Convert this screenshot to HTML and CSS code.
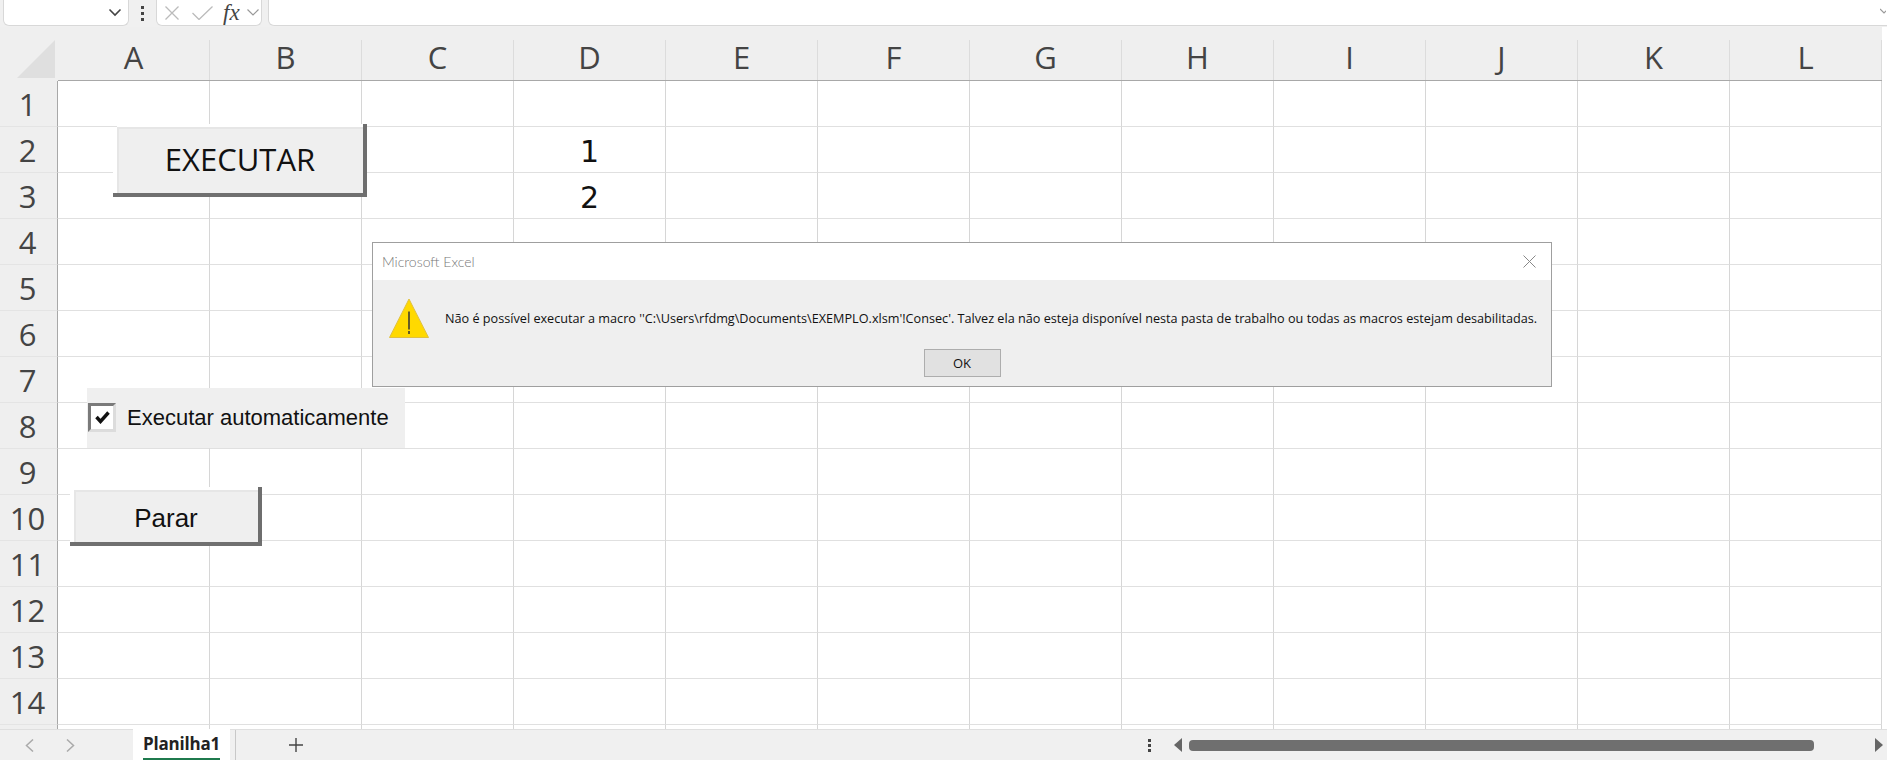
FILE: index.html
```html
<!DOCTYPE html>
<html lang="pt">
<head>
<meta charset="utf-8">
<title>Microsoft Excel</title>
<link rel="stylesheet" href="styles.css">
</head>
<body>
<div class="app">
  <div class="formula-bar">
    <div class="box name-box">
      <svg class="chev" width="14" height="9" viewBox="0 0 14 9"><path d="M1.500 1.500 7 7l5.500-5.500" fill="none" stroke="#444" stroke-width="1.600"/></svg>
    </div>
    <div class="dots"><i></i><i></i><i></i></div>
    <div class="box fx-box">
      <svg class="ic-x" width="14" height="14" viewBox="0 0 14 14"><path d="M.5.5l13 13M13.500.5l-13 13" stroke="#bbb" stroke-width="1.300" fill="none"/></svg>
      <svg class="ic-ok" width="21" height="14" viewBox="0 0 21 14"><path d="M.5 7l6.500 6.500L20.500.5" stroke="#bbb" stroke-width="1.300" fill="none"/></svg>
      <span class="fx">fx</span>
      <svg class="ic-chev" width="12" height="7" viewBox="0 0 12 7"><path d="M.5.5 6 6 11.500.5" fill="none" stroke="#999" stroke-width="1.200"/></svg>
    </div>
    <div class="box formula-input">
      <svg width="6" height="6" viewBox="0 0 6 6"><path d="M0 1l4 4 4-4" fill="none" stroke="#999" stroke-width="1.200"/></svg>
    </div>
  </div>

  <div class="sheet">
    <div class="corner"><svg width="38" height="38" viewBox="0 0 38 38"><path d="M38 0v38H0z" fill="#dfdfdf"/></svg></div>
    <div class="col-h">A</div><div class="col-h">B</div><div class="col-h">C</div><div class="col-h">D</div><div class="col-h">E</div><div class="col-h">F</div><div class="col-h">G</div><div class="col-h">H</div><div class="col-h">I</div><div class="col-h">J</div><div class="col-h">K</div><div class="col-h">L</div>

    <div class="row-h">1</div><div class="c"></div><div class="c"></div><div class="c"></div><div class="c"></div><div class="c"></div><div class="c"></div><div class="c"></div><div class="c"></div><div class="c"></div><div class="c"></div><div class="c"></div><div class="c"></div>
    <div class="row-h">2</div><div class="c"></div><div class="c"></div><div class="c"></div><div class="c num">1</div><div class="c"></div><div class="c"></div><div class="c"></div><div class="c"></div><div class="c"></div><div class="c"></div><div class="c"></div><div class="c"></div>
    <div class="row-h">3</div><div class="c"></div><div class="c"></div><div class="c"></div><div class="c num">2</div><div class="c"></div><div class="c"></div><div class="c"></div><div class="c"></div><div class="c"></div><div class="c"></div><div class="c"></div><div class="c"></div>
    <div class="row-h">4</div><div class="c"></div><div class="c"></div><div class="c"></div><div class="c"></div><div class="c"></div><div class="c"></div><div class="c"></div><div class="c"></div><div class="c"></div><div class="c"></div><div class="c"></div><div class="c"></div>
    <div class="row-h">5</div><div class="c"></div><div class="c"></div><div class="c"></div><div class="c"></div><div class="c"></div><div class="c"></div><div class="c"></div><div class="c"></div><div class="c"></div><div class="c"></div><div class="c"></div><div class="c"></div>
    <div class="row-h">6</div><div class="c"></div><div class="c"></div><div class="c"></div><div class="c"></div><div class="c"></div><div class="c"></div><div class="c"></div><div class="c"></div><div class="c"></div><div class="c"></div><div class="c"></div><div class="c"></div>
    <div class="row-h">7</div><div class="c"></div><div class="c"></div><div class="c"></div><div class="c"></div><div class="c"></div><div class="c"></div><div class="c"></div><div class="c"></div><div class="c"></div><div class="c"></div><div class="c"></div><div class="c"></div>
    <div class="row-h">8</div><div class="c"></div><div class="c"></div><div class="c"></div><div class="c"></div><div class="c"></div><div class="c"></div><div class="c"></div><div class="c"></div><div class="c"></div><div class="c"></div><div class="c"></div><div class="c"></div>
    <div class="row-h">9</div><div class="c"></div><div class="c"></div><div class="c"></div><div class="c"></div><div class="c"></div><div class="c"></div><div class="c"></div><div class="c"></div><div class="c"></div><div class="c"></div><div class="c"></div><div class="c"></div>
    <div class="row-h">10</div><div class="c"></div><div class="c"></div><div class="c"></div><div class="c"></div><div class="c"></div><div class="c"></div><div class="c"></div><div class="c"></div><div class="c"></div><div class="c"></div><div class="c"></div><div class="c"></div>
    <div class="row-h">11</div><div class="c"></div><div class="c"></div><div class="c"></div><div class="c"></div><div class="c"></div><div class="c"></div><div class="c"></div><div class="c"></div><div class="c"></div><div class="c"></div><div class="c"></div><div class="c"></div>
    <div class="row-h">12</div><div class="c"></div><div class="c"></div><div class="c"></div><div class="c"></div><div class="c"></div><div class="c"></div><div class="c"></div><div class="c"></div><div class="c"></div><div class="c"></div><div class="c"></div><div class="c"></div>
    <div class="row-h">13</div><div class="c"></div><div class="c"></div><div class="c"></div><div class="c"></div><div class="c"></div><div class="c"></div><div class="c"></div><div class="c"></div><div class="c"></div><div class="c"></div><div class="c"></div><div class="c"></div>
    <div class="row-h">14</div><div class="c"></div><div class="c"></div><div class="c"></div><div class="c"></div><div class="c"></div><div class="c"></div><div class="c"></div><div class="c"></div><div class="c"></div><div class="c"></div><div class="c"></div><div class="c"></div>
    <div class="row-h partial"></div><div class="c partial"></div><div class="c partial"></div><div class="c partial"></div><div class="c partial"></div><div class="c partial"></div><div class="c partial"></div><div class="c partial"></div><div class="c partial"></div><div class="c partial"></div><div class="c partial"></div><div class="c partial"></div><div class="c partial"></div>
  </div>

  <div class="tabs">
    <div class="nav"><svg width="9" height="13" viewBox="0 0 9 13"><path d="M8 .5 1.500 6.500 8 12.500" fill="none" stroke="#aaa" stroke-width="1.500"/></svg><svg width="9" height="13" viewBox="0 0 9 13"><path d="m1 .5 6.500 6L1 12.500" fill="none" stroke="#aaa" stroke-width="1.500"/></svg></div>
    <div class="tab"><span class="tab-label">Planilha1</span></div>
    <div class="add"><svg width="14" height="14" viewBox="0 0 14 14"><path d="M7 0v14M0 7h14" stroke="#444" stroke-width="1.400"/></svg></div>
    <div class="scroll">
      <div class="dots small"><i></i><i></i><i></i></div>
      <svg class="arrow-l" width="9" height="14" viewBox="0 0 9 14"><path d="M8 0v14L0 7z" fill="#666"/></svg>
      <div class="thumb"></div>
      <svg class="arrow-r" width="8" height="14" viewBox="0 0 8 14"><path d="M0 0v14l8-7z" fill="#666"/></svg>
    </div>
  </div>

  <div class="xl-btn run-btn">EXECUTAR</div>
  <div class="xl-btn stop-btn">Parar</div>

  <div class="check-ctl">
    <div class="check"><svg width="15" height="13" viewBox="0 0 15 13"><path d="M1.500 6l4 4.500 8-9" fill="none" stroke="#111" stroke-width="3.400"/></svg></div>
    <span class="check-label">Executar automaticamente</span>
  </div>

  <div class="dialog">
    <div class="dlg-title">
      <span>Microsoft Excel</span>
      <svg width="13" height="13" viewBox="0 0 13 13"><path d="M.5.5l12 12M12.500.5l-12 12" stroke="#888" stroke-width="1" fill="none"/></svg>
    </div>
    <div class="dlg-body">
      <div class="dlg-msg">
        <svg class="warn" width="40" height="40" viewBox="0 0 40 40"><path d="M20 1 39.500 39.500H.5z" fill="#ffd900" stroke="#e0c040" stroke-width="1"/><path d="M20 13.500v18M20 33v3" stroke="#333" stroke-width="1.500"/></svg>
        <p>Não é possível executar a macro ''C:\Users\rfdmg\Documents\EXEMPLO.xlsm'!Consec'. Talvez ela não esteja disponível nesta pasta de trabalho ou todas as macros estejam desabilitadas.</p>
      </div>
      <div class="dlg-actions"><div class="ok">OK</div></div>
    </div>
  </div>
</div>
</body>
</html>
```
FILE: styles.css
```css
* { box-sizing: border-box; }
html, body { margin: 0; height: 100%; overflow: hidden; background: #fff; }
body { font-family: "Open Sans", "Noto Sans", sans-serif; }

.app { position: relative; width: 1887px; height: 760px; display: flex; flex-direction: column; overflow: hidden; }

.formula-bar { height: 27px; flex: none; background: #f0f0f0; display: flex; align-items: flex-start; padding-left: 3px; }
.box { height: 26px; background: #fff; border: 1px solid #d8d8d8; border-top: 0; border-radius: 0 0 6px 6px; display: flex; align-items: center; flex: none; }
.name-box { width: 126px; justify-content: flex-end; padding-right: 6px; }
.fx-box { width: 106px; padding-left: 8px; }
.ic-ok { margin-left: 13px; }
.ic-chev { margin-left: 7px; }
.fx { font-family: "Liberation Serif", serif; font-style: italic; font-size: 23px; color: #444; line-height: 1; margin-left: 10px; width: 17px; }
.formula-input { flex: 1; margin-left: 6px; margin-right: -2px; border-radius: 0 0 0 6px; justify-content: flex-end; align-items: flex-start; padding-top: 8px; padding-right: 2px; }
.dots { width: 27px; height: 26px; flex: none; display: flex; flex-direction: column; align-items: center; justify-content: center; gap: 3px; }
.dots i { display: block; width: 3px; height: 3px; background: #444; }

.sheet { flex: none; height: 702px; display: grid; grid-template-columns: 58px repeat(12, 152px); grid-template-rows: 54px repeat(14, 46px) 5px; overflow: hidden; background: #fff; }
.corner { background: #efefef; display: flex; align-items: flex-end; justify-content: flex-end; padding: 0 3px 3px 0; }
.col-h { background: #efefef linear-gradient(#dcdcdc, #dcdcdc) right bottom / 1px 40px no-repeat; border-bottom: 1px solid #a8a8a8; display: flex; align-items: center; justify-content: center; font-size: 31px; color: #444; padding: 6px 1px 0 0; }
.row-h { background: #efefef; border-right: 1px solid #a8a8a8; border-bottom: 1px solid #e4e4e4; display: flex; align-items: center; justify-content: center; font-size: 31px; color: #444; padding: 2px 2px 0 0; line-height: 1; }
.row-h.partial { border-bottom: 0; padding: 0; }
.c { border-right: 1px solid #d6d6d6; border-bottom: 1px solid #e0e0e0; }
.c.partial { border-bottom: 0; }
.num { display: flex; align-items: center; justify-content: center; font-family: "DejaVu Sans", sans-serif; font-size: 30px; color: #111; line-height: 1; padding-top: 5px; }

.tabs { flex: none; height: 31px; background: #f0f0f0; border-top: 1px solid #dfdfdf; display: flex; align-items: stretch; }
.nav { width: 133px; flex: none; display: flex; gap: 32px; align-items: center; padding-left: 25px; }
.tab { width: 97px; flex: none; background: #fff; display: flex; justify-content: center; margin-top: -1px; }
.tab-label { font-size: 17px; font-weight: 700; color: #222; line-height: 29px; height: 31px; border-bottom: 2px solid #1f7a4d; letter-spacing: -.2px; }
.add { width: 130px; flex: none; border-left: 1px solid #c8c8c8; margin-left: 5px; display: flex; align-items: center; justify-content: center; padding-right: 10px; }
.scroll { flex: 1; display: flex; align-items: center; padding-left: 779px; }
.scroll .dots.small { width: 10px; gap: 2px; }
.arrow-l { margin-left: 20px; flex: none; }
.thumb { width: 625px; height: 11px; flex: none; background: #6f6f6f; border-radius: 4px; margin-left: 6px; }
.arrow-r { margin-left: 61px; flex: none; }

.xl-btn { position: absolute; background: #efefef; color: #111; display: flex; align-items: center; justify-content: center; box-shadow: inset 2px 2px 0 #e6e6e6, 0 -3px 0 #fff, -4px 0 0 #fff; }
.xl-btn::before { content: ""; position: absolute; top: -3px; right: -4px; bottom: -4px; width: 4px; background: #6e6e6e; }
.xl-btn::after { content: ""; position: absolute; left: -4px; right: -4px; bottom: -4px; height: 4px; background: #707070; }
.run-btn { left: 117px; top: 127px; width: 246px; height: 66px; font-size: 31px; padding-bottom: 2px; }
.stop-btn { left: 74px; top: 490px; width: 184px; height: 52px; font-family: "Liberation Sans", sans-serif; font-size: 26px; padding-top: 4px; }

.check-ctl { position: absolute; left: 87px; top: 388px; width: 318px; height: 60px; background: #efefef; display: flex; align-items: center; gap: 11px; padding: 0 0 2px 1px; }
.check { width: 28px; height: 29px; flex: none; background: #fff; border: 3px solid #dcdcdc; border-top-color: #7a7a7a; border-left-color: #7a7a7a; display: flex; align-items: center; justify-content: center; }
.check-label { font-family: "Liberation Sans", sans-serif; font-size: 22px; color: #111; white-space: nowrap; padding-top: 1px; }

.dialog { position: absolute; left: 372px; top: 242px; width: 1180px; height: 145px; border: 1px solid #9f9f9f; background: #efefef; display: flex; flex-direction: column; }
.dlg-title { height: 37px; flex: none; background: #fff; display: flex; align-items: center; justify-content: space-between; padding: 0 15px 0 9px; font-family: "Lato", sans-serif; font-weight: 300; font-size: 14px; color: #777; }
.dlg-body { flex: 1; display: flex; flex-direction: column; }
.dlg-msg { display: flex; align-items: flex-start; height: 69px; padding: 18px 0 0 16px; gap: 16px; }
.dlg-msg p { margin: 11px 0 0; font-size: 12.670px; line-height: 18px; color: #111; white-space: nowrap; }
.dlg-actions { display: flex; justify-content: center; }
.ok { width: 77px; height: 28px; background: #e1e1e1; border: 1px solid #adadad; font-size: 13px; color: #111; display: flex; align-items: center; justify-content: center; }
```
